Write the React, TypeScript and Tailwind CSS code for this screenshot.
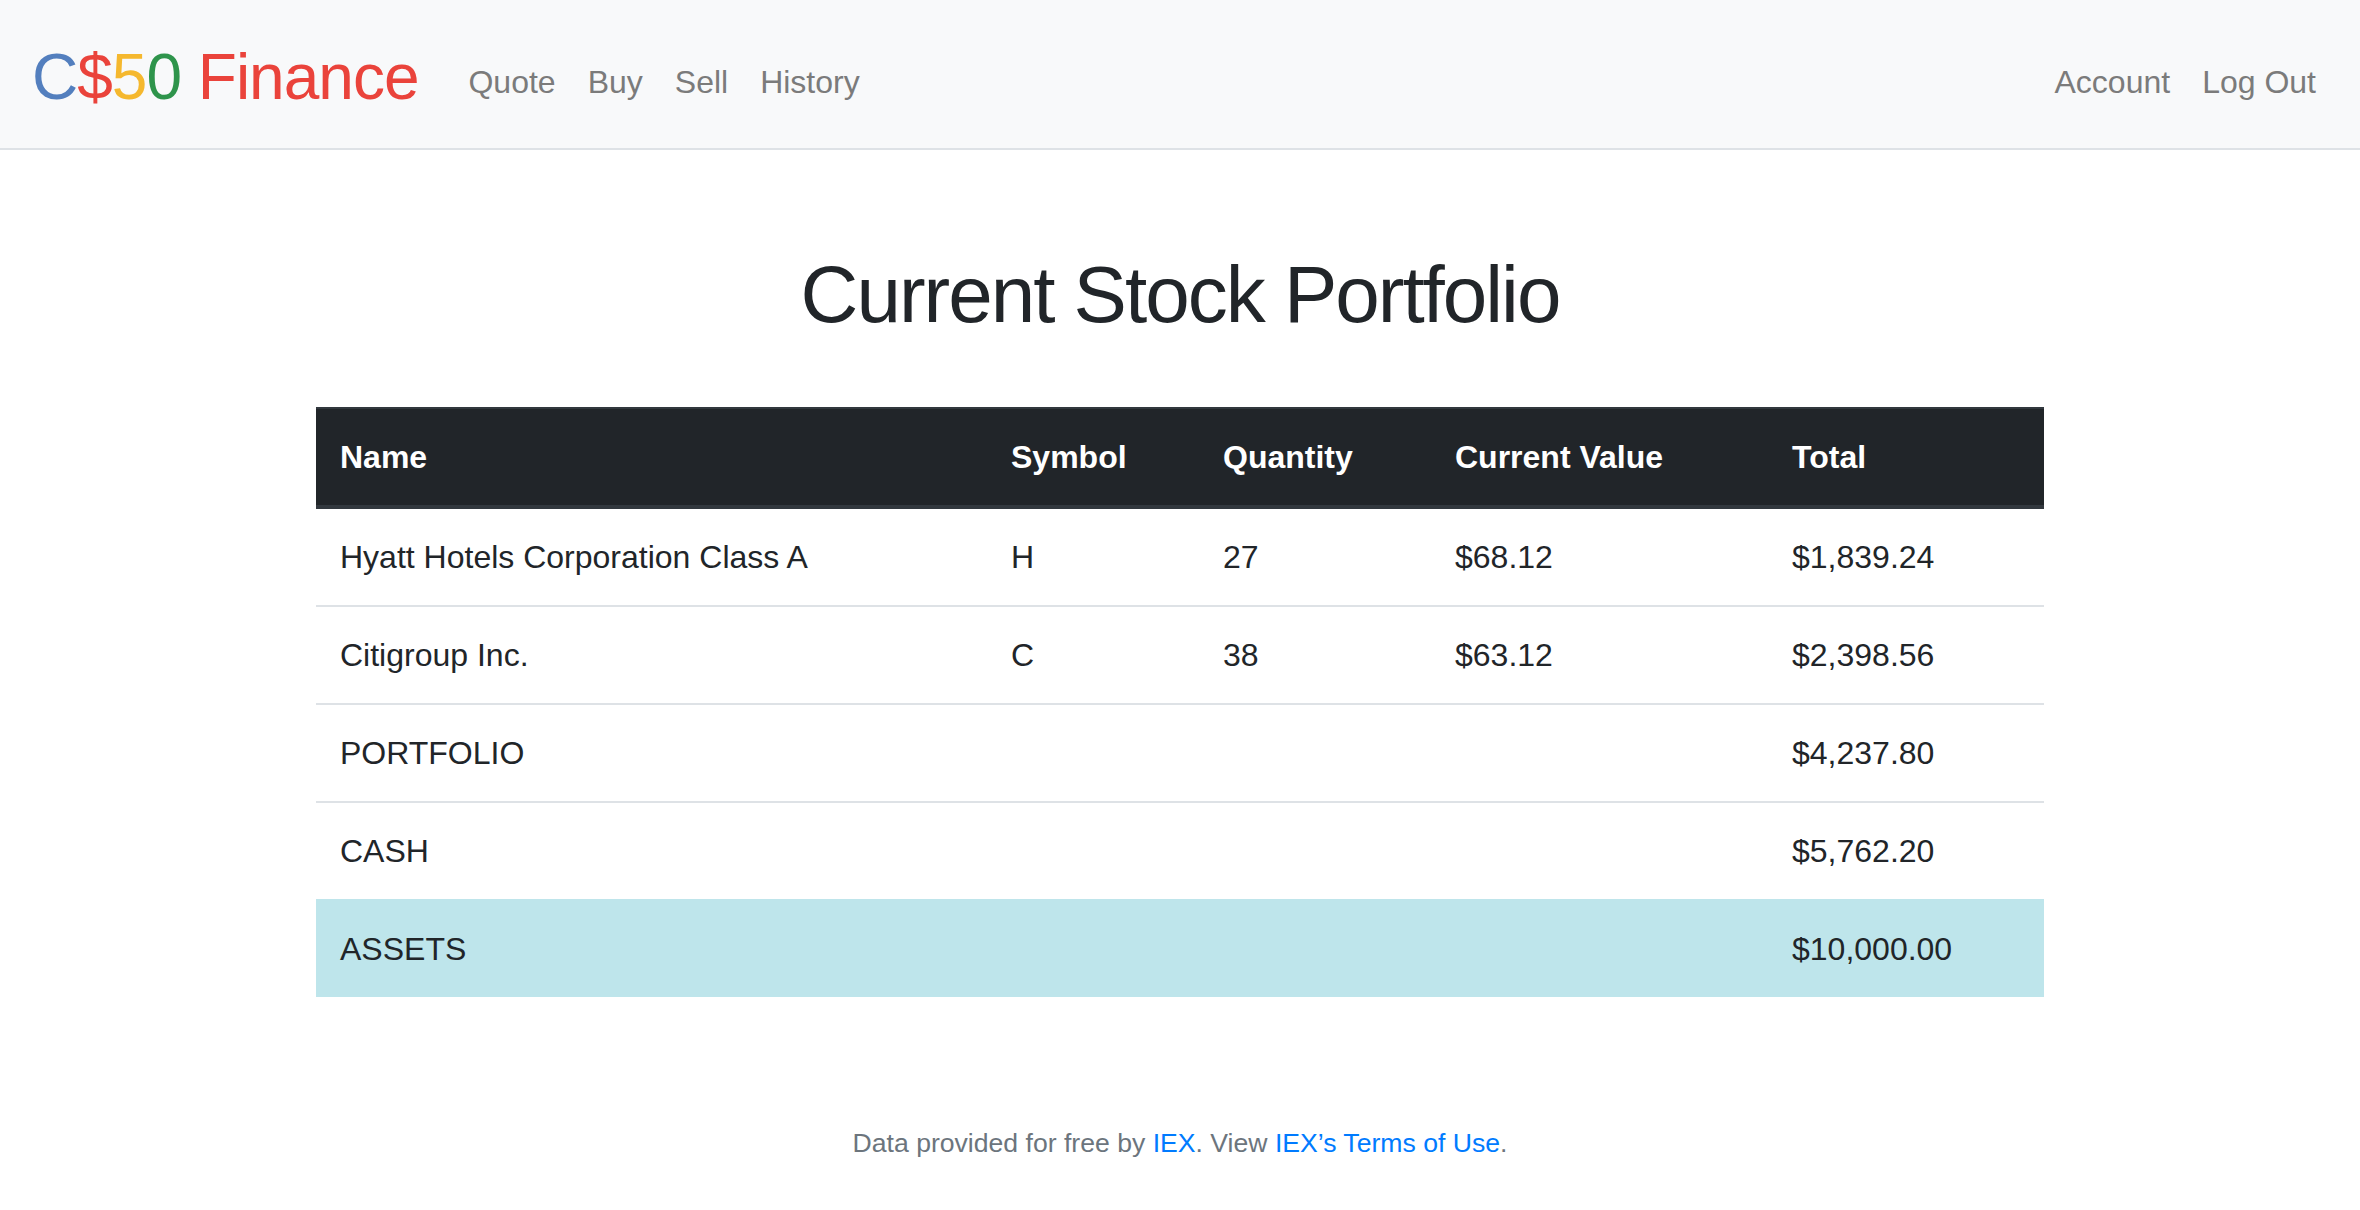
import React from "react";

const font = { fontFamily: '"Liberation Sans", Arial, sans-serif' };

const rows = [
  { name: "Hyatt Hotels Corporation Class A", symbol: "H", qty: "27", price: "$68.12", total: "$1,839.24" },
  { name: "Citigroup Inc.", symbol: "C", qty: "38", price: "$63.12", total: "$2,398.56" },
];

export default function App() {
  return (
    <div className="min-h-[1210px] bg-white text-[#212529]" style={font}>
      <nav className="flex h-[150px] items-center border-b-2 border-[#dee2e6] bg-[#f8f9fa] pl-[32px] pr-[28px]">
        <a className="mr-[34px] pt-[5px] text-[64px] leading-none tracking-[-1px]">
          <span className="text-[#537fbe]">C</span>
          <span className="text-[#ea433b]">$</span>
          <span className="text-[#f5b82e]">5</span>
          <span className="text-[#2e944b]">0</span>
          <span className="text-[#ea433b]"> Finance</span>
        </a>
        <ul className="flex items-center pt-[16px] text-[32px] text-[#7b7b7b]">
          <li className="px-[16px]">Quote</li>
          <li className="px-[16px]">Buy</li>
          <li className="px-[16px]">Sell</li>
          <li className="px-[16px]">History</li>
        </ul>
        <ul className="ml-auto flex items-center pt-[16px] text-[32px] text-[#7b7b7b]">
          <li className="px-[16px]">Account</li>
          <li className="px-[16px]">Log Out</li>
        </ul>
      </nav>
      <main className="flex flex-col items-center pt-[97px]">
        <h1 className="text-[80px] font-medium leading-[96px] tracking-[-2px] text-[#212529]">Current Stock Portfolio</h1>
        <table className="mt-[64px] w-[1728px] border-collapse text-left text-[32px] leading-[48px]">
          <thead>
            <tr className="bg-[#212529] text-white">
              <th className="w-[671px] border-t-2 border-b-4 border-[#32383e] px-[24px] py-[24px] font-bold">Name</th>
              <th className="w-[212px] border-t-2 border-b-4 border-[#32383e] px-[24px] py-[24px] font-bold">Symbol</th>
              <th className="w-[232px] border-t-2 border-b-4 border-[#32383e] px-[24px] py-[24px] font-bold">Quantity</th>
              <th className="w-[337px] border-t-2 border-b-4 border-[#32383e] px-[24px] py-[24px] font-bold">Current Value</th>
              <th className="border-t-2 border-b-4 border-[#32383e] px-[24px] py-[24px] font-bold">Total</th>
            </tr>
          </thead>
          <tbody>
            {rows.map((r, i) => (
              <tr key={r.symbol}>
                <td className={`${i === 0 ? "" : "border-t-2"} border-[#dee2e6] px-[24px] py-[24px]`}>{r.name}</td>
                <td className={`${i === 0 ? "" : "border-t-2"} border-[#dee2e6] px-[24px] py-[24px]`}>{r.symbol}</td>
                <td className={`${i === 0 ? "" : "border-t-2"} border-[#dee2e6] px-[24px] py-[24px]`}>{r.qty}</td>
                <td className={`${i === 0 ? "" : "border-t-2"} border-[#dee2e6] px-[24px] py-[24px]`}>{r.price}</td>
                <td className={`${i === 0 ? "" : "border-t-2"} border-[#dee2e6] px-[24px] py-[24px]`}>{r.total}</td>
              </tr>
            ))}
            <tr>
              <td className="border-t-2 border-[#dee2e6] px-[24px] py-[24px]">PORTFOLIO</td>
              <td className="border-t-2 border-[#dee2e6] px-[24px] py-[24px]"></td>
              <td className="border-t-2 border-[#dee2e6] px-[24px] py-[24px]"></td>
              <td className="border-t-2 border-[#dee2e6] px-[24px] py-[24px]"></td>
              <td className="border-t-2 border-[#dee2e6] px-[24px] py-[24px]">$4,237.80</td>
            </tr>
            <tr>
              <td className="border-t-2 border-[#dee2e6] px-[24px] py-[24px]">CASH</td>
              <td className="border-t-2 border-[#dee2e6] px-[24px] py-[24px]"></td>
              <td className="border-t-2 border-[#dee2e6] px-[24px] py-[24px]"></td>
              <td className="border-t-2 border-[#dee2e6] px-[24px] py-[24px]"></td>
              <td className="border-t-2 border-[#dee2e6] px-[24px] py-[24px]">$5,762.20</td>
            </tr>
            <tr className="bg-[#bee5eb]">
              <td className="border-t-2 border-[#bee5eb] px-[24px] py-[24px]">ASSETS</td>
              <td className="border-t-2 border-[#bee5eb] px-[24px] py-[24px]"></td>
              <td className="border-t-2 border-[#bee5eb] px-[24px] py-[24px]"></td>
              <td className="border-t-2 border-[#bee5eb] px-[24px] py-[24px]"></td>
              <td className="border-t-2 border-[#bee5eb] px-[24px] py-[24px]">$10,000.00</td>
            </tr>
          </tbody>
        </table>
        <footer className="mt-[127px] text-[26.6px] leading-[38px] text-[#6c757d]">
          Data provided for free by <a className="text-[#007bff]">IEX</a>. View{" "}
          <a className="text-[#007bff]">IEX’s Terms of Use</a>.
        </footer>
      </main>
    </div>
  );
}
